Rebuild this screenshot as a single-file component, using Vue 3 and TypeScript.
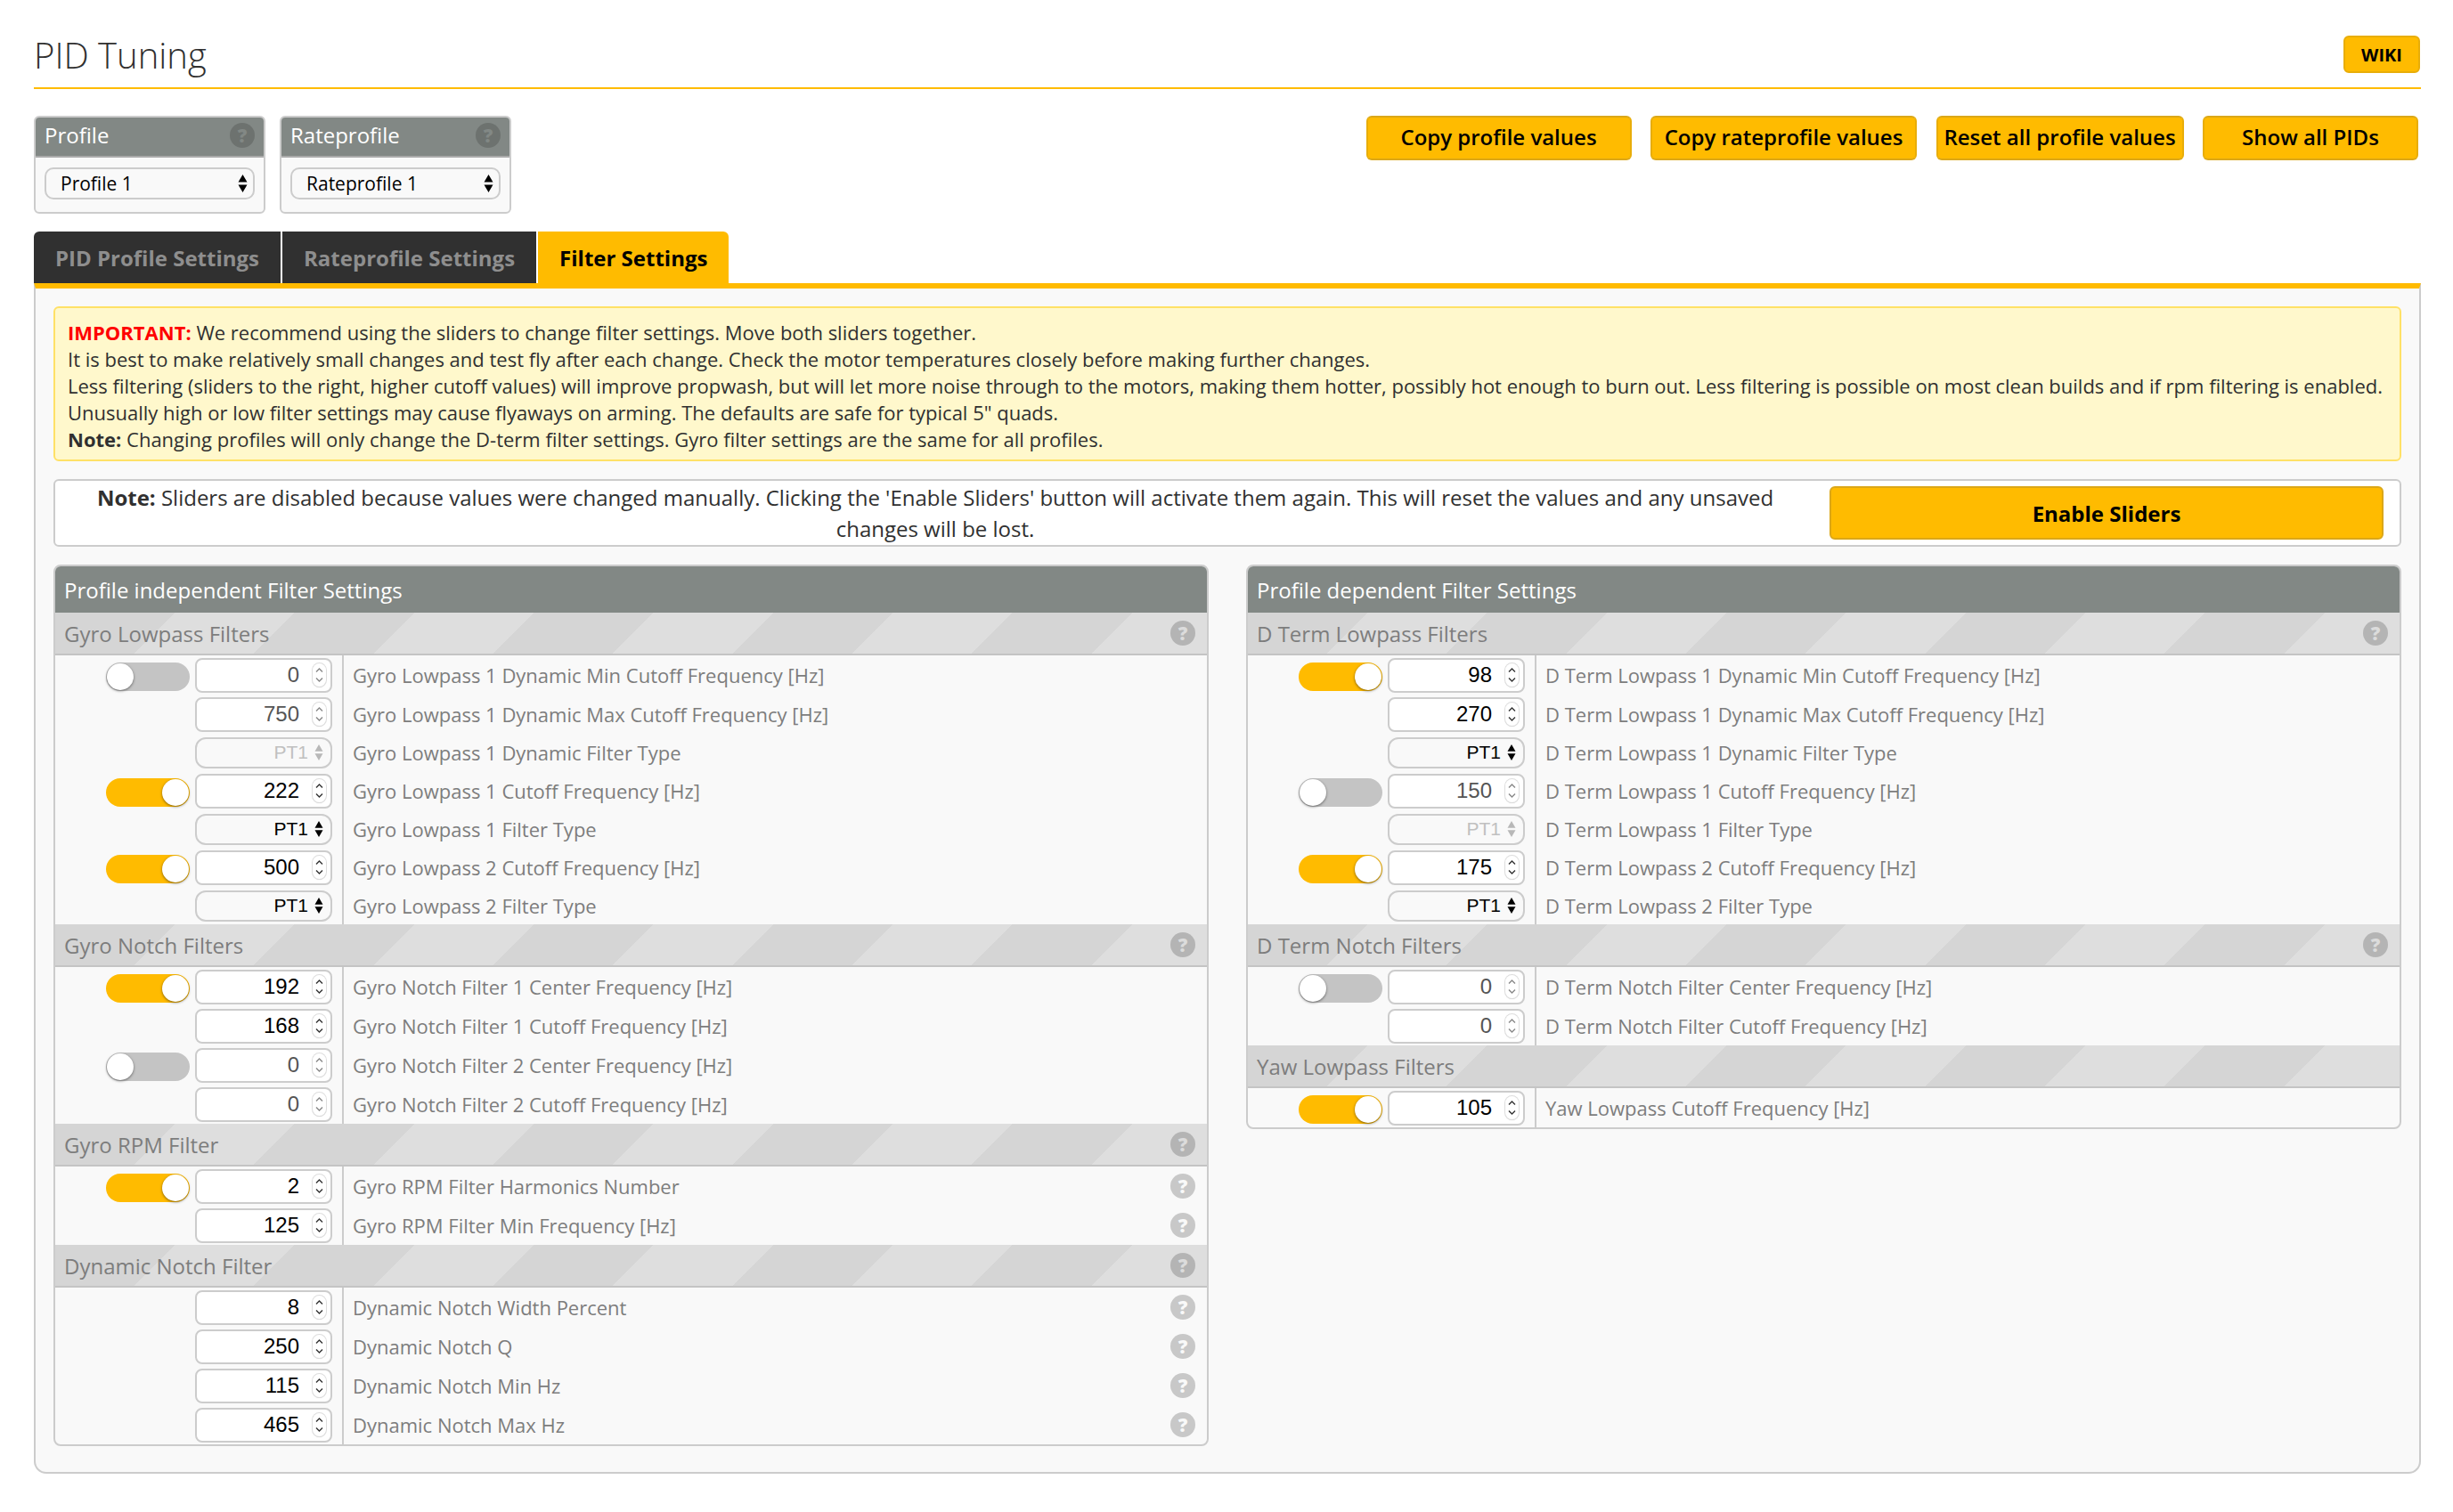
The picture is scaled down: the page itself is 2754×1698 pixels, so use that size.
<script setup lang="ts">
interface Row {
  label: string
  value: string
  kind?: 'num' | 'select'
  toggle?: 'on' | 'off'
  dim?: boolean
  disabled?: boolean
  help?: boolean
}
interface Section {
  title: string
  help?: boolean
  rows: Row[]
}

const left: Section[] = [
  {
    title: 'Gyro Lowpass Filters',
    help: true,
    rows: [
      { label: 'Gyro Lowpass 1 Dynamic Min Cutoff Frequency [Hz]', value: '0', toggle: 'off', dim: true },
      { label: 'Gyro Lowpass 1 Dynamic Max Cutoff Frequency [Hz]', value: '750', dim: true },
      { label: 'Gyro Lowpass 1 Dynamic Filter Type', value: 'PT1', kind: 'select', disabled: true },
      { label: 'Gyro Lowpass 1 Cutoff Frequency [Hz]', value: '222', toggle: 'on' },
      { label: 'Gyro Lowpass 1 Filter Type', value: 'PT1', kind: 'select' },
      { label: 'Gyro Lowpass 2 Cutoff Frequency [Hz]', value: '500', toggle: 'on' },
      { label: 'Gyro Lowpass 2 Filter Type', value: 'PT1', kind: 'select' },
    ],
  },
  {
    title: 'Gyro Notch Filters',
    help: true,
    rows: [
      { label: 'Gyro Notch Filter 1 Center Frequency [Hz]', value: '192', toggle: 'on' },
      { label: 'Gyro Notch Filter 1 Cutoff Frequency [Hz]', value: '168' },
      { label: 'Gyro Notch Filter 2 Center Frequency [Hz]', value: '0', toggle: 'off', dim: true },
      { label: 'Gyro Notch Filter 2 Cutoff Frequency [Hz]', value: '0', dim: true },
    ],
  },
  {
    title: 'Gyro RPM Filter',
    help: true,
    rows: [
      { label: 'Gyro RPM Filter Harmonics Number', value: '2', toggle: 'on', help: true },
      { label: 'Gyro RPM Filter Min Frequency [Hz]', value: '125', help: true },
    ],
  },
  {
    title: 'Dynamic Notch Filter',
    help: true,
    rows: [
      { label: 'Dynamic Notch Width Percent', value: '8', help: true },
      { label: 'Dynamic Notch Q', value: '250', help: true },
      { label: 'Dynamic Notch Min Hz', value: '115', help: true },
      { label: 'Dynamic Notch Max Hz', value: '465', help: true },
    ],
  },
]

const right: Section[] = [
  {
    title: 'D Term Lowpass Filters',
    help: true,
    rows: [
      { label: 'D Term Lowpass 1 Dynamic Min Cutoff Frequency [Hz]', value: '98', toggle: 'on' },
      { label: 'D Term Lowpass 1 Dynamic Max Cutoff Frequency [Hz]', value: '270' },
      { label: 'D Term Lowpass 1 Dynamic Filter Type', value: 'PT1', kind: 'select' },
      { label: 'D Term Lowpass 1 Cutoff Frequency [Hz]', value: '150', toggle: 'off', dim: true },
      { label: 'D Term Lowpass 1 Filter Type', value: 'PT1', kind: 'select', disabled: true },
      { label: 'D Term Lowpass 2 Cutoff Frequency [Hz]', value: '175', toggle: 'on' },
      { label: 'D Term Lowpass 2 Filter Type', value: 'PT1', kind: 'select' },
    ],
  },
  {
    title: 'D Term Notch Filters',
    help: true,
    rows: [
      { label: 'D Term Notch Filter Center Frequency [Hz]', value: '0', toggle: 'off', dim: true },
      { label: 'D Term Notch Filter Cutoff Frequency [Hz]', value: '0', dim: true },
    ],
  },
  {
    title: 'Yaw Lowpass Filters',
    rows: [{ label: 'Yaw Lowpass Cutoff Frequency [Hz]', value: '105', toggle: 'on' }],
  },
]

const panels = [
  { title: 'Profile independent Filter Settings', sections: left },
  { title: 'Profile dependent Filter Settings', sections: right },
]
const actions = ['Copy profile values', 'Copy rateprofile values', 'Reset all profile values', 'Show all PIDs']
const pickers = [
  { title: 'Profile', value: 'Profile 1' },
  { title: 'Rateprofile', value: 'Rateprofile 1' },
]
</script>

<template>
  <div class="page">
    <div class="titlebar">
      <div class="title">PID Tuning</div>
      <div class="wiki">WIKI</div>
    </div>

    <div class="toolbar">
      <div class="pickers">
        <div v-for="p in pickers" :key="p.title" class="picker">
          <div class="picker-head">
            <span>{{ p.title }}</span>
            <span class="q q-head">?</span>
          </div>
          <div class="picker-body">
            <div class="picker-select">
              <span>{{ p.value }}</span>
              <svg class="updown" width="11" height="20" viewBox="0 0 10 20"><path d="M5 0l5 8.5H0zM5 20L0 11.5h10z" /></svg>
            </div>
          </div>
        </div>
      </div>
      <div class="actions">
        <div v-for="a in actions" :key="a" class="btn">{{ a }}</div>
      </div>
    </div>

    <div class="tabs">
      <div class="tab">PID Profile Settings</div>
      <div class="tab">Rateprofile Settings</div>
      <div class="tab active">Filter Settings</div>
    </div>

    <div class="content">
      <div class="warning">
        <p><b class="red">IMPORTANT:</b> We recommend using the sliders to change filter settings. Move both sliders together.</p>
        <p>It is best to make relatively small changes and test fly after each change. Check the motor temperatures closely before making further changes.</p>
        <p>Less filtering (sliders to the right, higher cutoff values) will improve propwash, but will let more noise through to the motors, making them hotter, possibly hot enough to burn out. Less filtering is possible on most clean builds and if rpm filtering is enabled.</p>
        <p>Unusually high or low filter settings may cause flyaways on arming. The defaults are safe for typical 5" quads.</p>
        <p><b>Note:</b> Changing profiles will only change the D-term filter settings. Gyro filter settings are the same for all profiles.</p>
      </div>

      <div class="slider-note">
        <div class="slider-text"><b>Note:</b> Sliders are disabled because values were changed manually. Clicking the 'Enable Sliders' button will activate them again. This will reset the values and any unsaved changes will be lost.</div>
        <div class="enable">Enable Sliders</div>
      </div>

      <div class="columns">
        <div v-for="panel in panels" :key="panel.title" class="panel">
          <div class="panel-head">{{ panel.title }}</div>
          <template v-for="s in panel.sections" :key="s.title">
            <div class="sub">
              <span>{{ s.title }}</span>
              <span v-if="s.help" class="q q-sub">?</span>
            </div>
            <div
              v-for="r in s.rows"
              :key="r.label"
              class="row"
              :class="{ 'row-select': r.kind === 'select' }"
            >
              <div class="cell-toggle">
                <div v-if="r.toggle" class="switch" :class="r.toggle">
                  <div class="knob"></div>
                </div>
              </div>
              <div class="cell-input">
                <div v-if="r.kind === 'select'" class="sel" :class="{ disabled: r.disabled }">
                  <span>{{ r.value }}</span>
                  <svg class="updown" width="10" height="18" viewBox="0 0 10 20"><path d="M5 0l5 8.5H0zM5 20L0 11.5h10z" /></svg>
                </div>
                <div v-else class="num" :class="{ dim: r.dim }">
                  <span>{{ r.value }}</span>
                  <div class="spin">
                    <svg width="15" height="26" viewBox="0 0 15 26" fill="none"><path d="M4 9.5L7.5 6l3.5 3.5M4 16.5L7.5 20l3.5-3.5" /></svg>
                  </div>
                </div>
              </div>
              <div class="cell-label">
                <span>{{ r.label }}</span>
                <span v-if="r.help" class="q q-row">?</span>
              </div>
            </div>
          </template>
        </div>
      </div>
    </div>
  </div>
</template>

<style>
html,
body {
  margin: 0;
  background: #fff;
}
</style>

<style scoped>
.page {
  box-sizing: border-box;
  width: 2754px;
  height: 1698px;
  padding: 0 36px 0 38px;
  font-family: "Open Sans", "Liberation Sans", sans-serif;
  font-size: 22px;
  color: #303030;
}
.titlebar {
  height: 98px;
  border-bottom: 2px solid #ffbb00;
  display: flex;
  justify-content: space-between;
  align-items: flex-start;
}
.title {
  font-size: 40px;
  font-weight: 300;
  line-height: 50px;
  margin-top: 37px;
}
.wiki {
  margin-top: 40px;
  margin-right: 1px;
  box-sizing: border-box;
  width: 86px;
  height: 42px;
  background: #ffbb00;
  border: 2px solid #e8ad09;
  border-radius: 6px;
  font-size: 20px;
  font-weight: 700;
  color: #000;
  display: flex;
  align-items: center;
  justify-content: center;
}
.toolbar {
  margin-top: 30px;
  height: 130px;
  display: flex;
  justify-content: space-between;
  align-items: flex-start;
}
.pickers {
  display: flex;
  gap: 16px;
}
.picker {
  width: 260px;
  height: 110px;
  box-sizing: border-box;
  border: 2px solid #ccc;
  border-radius: 6px;
  background: #f9f9f9;
  overflow: hidden;
}
.picker-head {
  box-sizing: content-box;
  height: 43px;
  margin: -2px -2px 0;
  background: #828885;
  color: #fff;
  border-bottom: 2px solid #aaa;
  padding: 0 12px 2px 12px;
  font-size: 24px;
  display: flex;
  align-items: center;
  justify-content: space-between;
}
.picker-body {
  padding: 11px 10px 0;
}
.picker-select {
  box-sizing: border-box;
  height: 36px;
  border: 2px solid #ccc;
  border-radius: 10px;
  background: #f9f9f9;
  font-size: 21px;
  color: #000;
  padding: 0 6px 0 16px;
  display: flex;
  align-items: center;
  justify-content: space-between;
}
.updown {
  fill: #000;
  flex: none;
}
.q {
  flex: none;
  width: 28px;
  height: 28px;
  border-radius: 50%;
  font-size: 21px;
  font-weight: 800;
  line-height: 28px;
  text-align: center;
}
.q-head {
  background: #6d726f;
  color: #828885;
}
.q-sub {
  background: #b4b4b4;
  color: #dcdcdc;
}
.q-row {
  background: #c8c8c8;
  color: #f9f9f9;
}
.actions {
  display: flex;
  margin-right: 3px;
  gap: 21.5px;
}
.btn {
  box-sizing: border-box;
  height: 50px;
  width: 242px;
  padding: 0 0 3px;
  white-space: nowrap;
  background: #ffbb00;
  border: 2px solid #e8ad09;
  border-top-color: #dba718;
  border-bottom-color: #dba718;
  border-radius: 6px;
  color: #000;
  font-weight: 600;
  font-size: 24px;
  display: flex;
  align-items: center;
  justify-content: center;
}
.btn:first-child {
  width: 298px;
}
.btn:nth-child(2) {
  width: 299px;
}
.btn:nth-child(3) {
  width: 278px;
}
.tabs {
  display: flex;
  height: 58px;
  gap: 2px;
}
.tab {
  background: #303030;
  color: #8e8e8e;
  font-weight: 700;
  font-size: 24px;
  padding: 0 24px;
  display: flex;
  align-items: center;
}
.tab:first-child {
  border-top-left-radius: 6px;
}
.tab.active {
  background: #ffbb00;
  color: #000;
  border-top-right-radius: 6px;
}
.content {
  box-sizing: border-box;
  height: 1337px;
  border: 2px solid #ccc;
  border-top: 6px solid #ffbb00;
  border-radius: 0 0 14px 14px;
  background: #f9f9f9;
  padding: 20px 20px 0;
}
.warning {
  box-sizing: border-box;
  height: 174px;
  padding: 12px 14px 0;
  background: #fff8cc;
  border: 2px solid #ffe166;
  border-radius: 6px;
  color: #303030;
  line-height: 30px;
}
.warning p {
  margin: 0;
}
.red {
  color: #f00;
}
.slider-note {
  margin-top: 20px;
  box-sizing: border-box;
  height: 76px;
  background: #fff;
  border: 2px solid #ccc;
  border-radius: 6px;
  display: flex;
  align-items: center;
  font-size: 24px;
  line-height: 35px;
}
.slider-text {
  width: 1982px;
  padding: 0 24px 0 18px;
  box-sizing: border-box;
  text-align: center;
  flex: none;
}
.enable {
  margin-left: 10px;
  width: 622px;
  height: 60px;
  box-sizing: border-box;
  background: #ffbb00;
  border: 2px solid #dba718;
  border-radius: 6px;
  color: #000;
  font-weight: 700;
  display: flex;
  align-items: center;
  justify-content: center;
}
.columns {
  margin-top: 20px;
  display: flex;
  align-items: flex-start;
  gap: 42px;
}
.panel {
  flex: 1;
  min-width: 0;
  box-sizing: border-box;
  border: 2px solid #ccc;
  border-radius: 8px;
  background: #f9f9f9;
  overflow: hidden;
}
.panel-head {
  box-sizing: border-box;
  height: 52px;
  background: #828885;
  color: #fff;
  font-size: 24px;
  line-height: 52px;
  padding: 1px 10px 0;
}
.sub {
  box-sizing: border-box;
  height: 48px;
  border-bottom: 2px solid #c4c4c4;
  padding: 0 13px 0 10px;
  color: #7d7d7d;
  font-size: 24px;
  display: flex;
  align-items: center;
  justify-content: space-between;
  background-image: repeating-linear-gradient(
    135deg,
    #d5d5d5 0,
    #d5d5d5 95px,
    #dedede 95px,
    #dedede 190px
  );
}
.row {
  height: 44px;
  display: flex;
  align-items: stretch;
}
.row-select {
  height: 42px;
}
.cell-toggle {
  width: 151px;
  flex: none;
  display: flex;
  justify-content: flex-end;
  align-items: center;
}
.cell-input {
  width: 154px;
  flex: none;
  margin-left: 6px;
  display: flex;
  align-items: center;
}
.cell-label {
  flex: 1;
  margin-left: 11px;
  border-left: 2px solid #ccc;
  padding: 0 13px 0 10px;
  color: #7d7d7d;
  display: flex;
  align-items: center;
  justify-content: space-between;
}
.switch {
  position: relative;
  box-sizing: border-box;
  width: 94px;
  height: 32px;
  margin-top: 4px;
  border-radius: 16px;
}
.switch.off {
  background: #c4c4c4;
}
.switch.on {
  background: #ffbb00;
}
.knob {
  position: absolute;
  top: 1px;
  width: 30px;
  height: 30px;
  border-radius: 50%;
  background: #fff;
  box-shadow: 0 1px 3px rgba(0, 0, 0, 0.5);
}
.off .knob {
  left: 1px;
}
.on .knob {
  right: 1px;
}
.num,
.sel {
  box-sizing: border-box;
  width: 154px;
  border: 2px solid #ccc;
  font-family: "Liberation Sans", Arial, sans-serif;
  color: #000;
  display: flex;
  align-items: center;
  justify-content: flex-end;
}
.num {
  height: 39px;
  background: #fff;
  border-radius: 8px;
  font-size: 24px;
  padding-right: 5px;
}
.num.dim {
  color: #555;
}
.num.dim .spin svg {
  stroke: #888;
}
.spin {
  margin-left: 15px;
  width: 15px;
  height: 26px;
  border-radius: 8px;
  background: #fff;
  box-shadow: 0 0 0 1px #ddd, 0 1px 1px #ccc;
}
.spin svg {
  display: block;
  stroke: #333;
  stroke-width: 1.4;
}
.sel {
  height: 35px;
  background: #f9f9f9;
  border-radius: 12px;
  font-size: 21px;
  padding-right: 8px;
  gap: 7px;
}
.sel.disabled {
  color: #c0c0c0;
}
.sel.disabled .updown {
  fill: #b8b8b8;
}
</style>
